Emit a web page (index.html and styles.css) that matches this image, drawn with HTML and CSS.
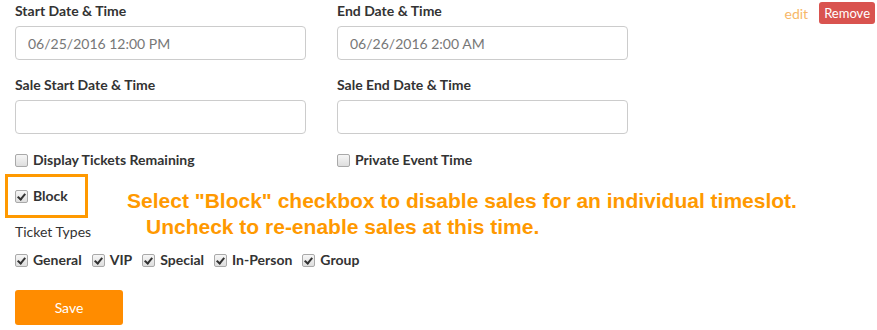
FILE: index.html
```html
<!DOCTYPE html>
<html lang="en">

<head>
    <meta charset="UTF-8">
    <title>Timeslot</title>
    <link rel="stylesheet" href="styles.css">
</head>

<body>
    <div class="timeslot">
        <form class="slot-form">
            <!-- dates -->
            <div class="row">
                <div class="field">
                    <label>Start Date &amp; Time</label>
                    <input type="text" value="06/25/2016 12:00 PM">
                </div>
                <div class="field">
                    <label>End Date &amp; Time</label>
                    <input type="text" value="06/26/2016 2:00 AM">
                </div>
            </div>

            <div class="row">
                <div class="field">
                    <label>Sale Start Date &amp; Time</label>
                    <input type="text">
                </div>
                <div class="field">
                    <label>Sale End Date &amp; Time</label>
                    <input type="text">
                </div>
            </div>

            <!-- options -->
            <div class="row options">
                <div class="field">
                    <label class="check"><input type="checkbox"><span>Display Tickets Remaining</span></label>
                </div>
                <div class="field">
                    <label class="check"><input type="checkbox"><span>Private Event Time</span></label>
                </div>
            </div>

            <div class="block-row">
                <div class="block-box">
                    <label class="check"><input type="checkbox" checked><span>Block</span></label>
                </div>
                <p class="callout">
                    Select "Block" checkbox to disable sales for an individual timeslot.<br>
                    <span class="indent">Uncheck to re-enable sales at this time.</span>
                </p>
            </div>

            <div class="ticket-types">
                <span class="types-title">Ticket Types</span>
                <div class="types-list">
                    <label class="check"><input type="checkbox" checked><span>General</span></label>
                    <label class="check"><input type="checkbox" checked><span>VIP</span></label>
                    <label class="check"><input type="checkbox" checked><span>Special</span></label>
                    <label class="check"><input type="checkbox" checked><span>In-Person</span></label>
                    <label class="check"><input type="checkbox" checked><span>Group</span></label>
                </div>
            </div>

            <button type="button" class="save">Save</button>
        </form>

        <div class="actions">
            <a href="#" class="edit">edit</a>
            <button type="button" class="remove">Remove</button>
        </div>
    </div>
</body>

</html>
```

FILE: styles.css
```css
body {
    font-family: Lato, "Open Sans", sans-serif;
    font-size: 14px;
    color: #333;
    margin: 0;
    background-color: #fff;
}

.timeslot {
    display: flex;
    align-items: flex-start;
    padding: 1px 2px 0 15px;
}

.slot-form {
    flex: 1;
    min-width: 0;
    display: flex;
    flex-direction: column;
    align-items: flex-start;
}

.row {
    display: flex;
    gap: 31px;
    margin-bottom: 15px;
}

.field {
    width: 291px;
}

.field label {
    display: block;
    font-weight: bold;
    line-height: 20px;
    margin-bottom: 5px;
}

.field input[type="text"] {
    display: block;
    box-sizing: border-box;
    width: 100%;
    height: 34px;
    padding: 0 12px;
    border: 1px solid #ccc;
    border-radius: 4px;
    font-family: inherit;
    font-size: 14px;
    color: #777;
}

.options {
    margin-top: 1px;
    margin-bottom: 0;
}

.options .field label {
    display: flex;
    margin-bottom: 0;
}

.check {
    display: inline-flex;
    align-items: center;
    font-weight: bold;
    line-height: 20px;
    white-space: nowrap;
}

.check input {
    appearance: none;
    -webkit-appearance: none;
    position: relative;
    flex-shrink: 0;
    width: 13px;
    height: 13px;
    margin: 0 5px 0 0;
    border: 1px solid #a9a9a9;
    border-radius: 2px;
    background: linear-gradient(#f6f6f6, #dedede);
}

.check input:checked::after {
    content: "";
    position: absolute;
    left: 3px;
    top: 1px;
    width: 3px;
    height: 6px;
    border: solid #333;
    border-width: 0 2px 2px 0;
    transform: rotate(40deg);
}

.block-row {
    display: flex;
    align-items: flex-start;
    height: 44px;
    margin-top: 4px;
}

.block-box {
    box-sizing: border-box;
    flex-shrink: 0;
    width: 83px;
    height: 44px;
    margin-left: -10px;
    padding: 9px 7px;
    border: 3px solid #ff9900;
}

.callout {
    margin: 14px 0 0 39px;
    font-family: "Liberation Sans", Arial, sans-serif;
    font-weight: bold;
    font-size: 21px;
    line-height: 26px;
    color: #ff9900;
    white-space: nowrap;
}

.callout .indent {
    padding-left: 19px;
}

.ticket-types {
    margin-top: 4px;
}

.types-title {
    display: block;
    line-height: 20px;
}

.types-list {
    display: flex;
    gap: 10px;
    margin-top: 8px;
}

.save {
    width: 108px;
    height: 35px;
    margin-top: 20px;
    border: none;
    border-radius: 3px;
    background-color: #ff8c00;
    color: #fff;
    font-family: inherit;
    font-size: 14px;
    cursor: pointer;
}

.actions {
    display: flex;
    flex-shrink: 0;
    align-items: center;
    gap: 11px;
    margin-top: 1px;
}

.edit {
    color: #f7b768;
    text-decoration: none;
}

.remove {
    height: 22px;
    padding: 0 5px;
    border: none;
    border-radius: 3px;
    background-color: #d9534f;
    color: #fff;
    font-family: inherit;
    font-size: 13px;
}
```
